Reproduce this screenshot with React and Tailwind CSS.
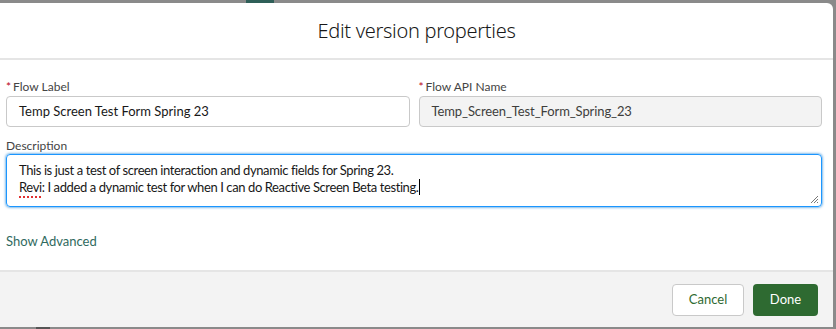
export default function App() {
  return (
    <div className="w-[836px] h-[329px] bg-[#8a8a8a] pt-[3px] pb-[2px] pr-[3px] overflow-hidden relative" style={{ fontFamily: 'Lato, "Noto Sans", sans-serif' }}>
      {/* bits of the page behind the modal */}
      <div className="absolute top-0 left-[246px] w-[28px] h-[3px] bg-[#2f5f58]" />
      <div className="absolute bottom-0 left-[36px] w-[14px] h-[2px] bg-[#555]" />

      <div className="h-full bg-white rounded-tr-[6px] flex flex-col">
        {/* Header */}
        <div className="h-[57px] flex items-center justify-center border-b-2 border-[#e5e5e5]">
          <h2 className="text-[20px] font-light text-[#181818] tracking-[-0.3px] font-['Noto_Sans',sans-serif]">Edit version properties</h2>
        </div>

        {/* Body */}
        <div className="flex-1 pt-[18px] pl-[6px] pr-[11px] flex flex-col">
          <div className="grid grid-cols-2 gap-[9px]">
            <div>
              <label className="block h-[18px] text-[12px] leading-[18px] text-[#444]">
                <span className="text-[#ba0517] mr-[2px]">*</span>Flow Label
              </label>
              <div className="h-[31px] border border-[#c9c9c9] rounded-[4px] px-[12px] flex items-center text-[13px] text-[#181818]">
                Temp Screen Test Form Spring 23
              </div>
            </div>
            <div>
              <label className="block h-[18px] text-[12px] leading-[18px] text-[#444]">
                <span className="text-[#ba0517] mr-[2px]">*</span>Flow API Name
              </label>
              <div className="h-[31px] border border-[#c9c9c9] bg-[#f3f3f3] rounded-[4px] px-[12px] flex items-center text-[13px] tracking-[-0.1px] text-[#3e3e3c]">
                Temp_Screen_Test_Form_Spring_23
              </div>
            </div>
          </div>

          <label className="block mt-[10px] h-[17px] text-[12px] leading-[17px] text-[#444]">Description</label>
          <div className="relative h-[53px] border border-[#1b96ff] rounded-[4px] shadow-[0_0_3px_#0176d3] px-[12px] pt-[7px] text-[13px] tracking-[-0.4px] leading-[17px] text-[#181818]">
            <div>This is just a test of screen interaction and dynamic fields for Spring 23.</div>
            <div>
              <span className="underline decoration-dotted decoration-[#e03030] underline-offset-[4px] decoration-[2px]">Revi</span>: I added a dynamic test for when I can do Reactive Screen Beta testing.
              <span className="inline-block w-px h-[16px] bg-black align-[-3px]" />
            </div>
            <svg className="absolute right-[2px] bottom-[2px]" width="9" height="9" viewBox="0 0 9 9">
              <path d="M8 1L1 8M8 4L4 8M8 7L7 8" stroke="#777" strokeWidth="1" />
            </svg>
          </div>

          <div className="mt-[25px] text-[13px] text-[#2f6a5e]">Show Advanced</div>
        </div>

        {/* Footer */}
        <div className="h-[57px] bg-[#f3f3f3] border-t-2 border-[#e5e5e5] flex items-center justify-end gap-[9px] pr-[15px]">
          <button className="h-[32px] w-[72px] rounded-[4px] border border-[#c9c9c9] bg-white text-[13px] text-[#2e6a31]">Cancel</button>
          <button className="h-[32px] w-[65px] rounded-[4px] bg-[#2e6a31] text-[13px] text-white">Done</button>
        </div>
      </div>
    </div>
  );
}
